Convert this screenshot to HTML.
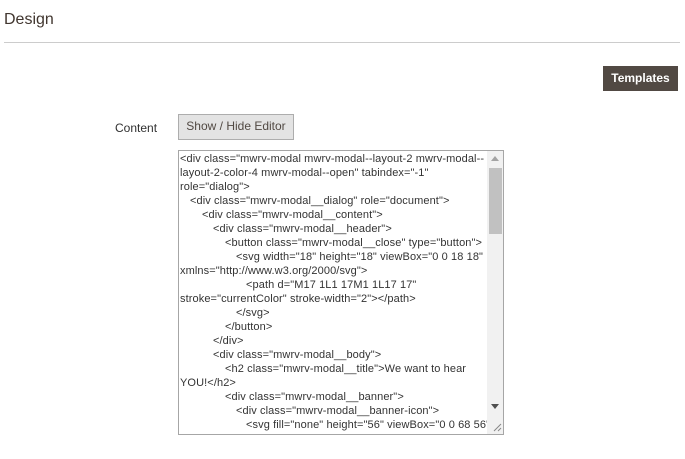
<!DOCTYPE html>
<html><head><meta charset="utf-8"><style>
*{margin:0;padding:0;box-sizing:border-box}
body{width:685px;height:459px;background:#fff;font-family:"Liberation Sans",sans-serif;position:relative;overflow:hidden;color:#333}
.abs{position:absolute}
#title{left:4px;top:11px;font-size:16px;color:#41362f}
#hr{left:4px;top:42px;width:676px;height:1px;background:#ccc}
#tpl{left:603px;top:66px;width:75px;height:25px;background:#514943;color:#fff;font-size:12px;font-weight:bold;text-align:center;line-height:25px}
#lbl{left:115px;top:121px;font-size:12px;color:#303030}
#btn{left:178px;top:114px;width:116px;height:26px;background:#e3e3e3;border:1px solid #adadad;font-size:12px;text-align:center;line-height:23px;color:#514943}
#ta{left:178px;top:150px;width:326px;height:285px;border:1px solid #a6a6a6;overflow:hidden}
.l{position:absolute;white-space:pre;font-size:11px;color:#333;letter-spacing:0.1px}
#sb{position:absolute;left:308px;top:0;width:16px;height:283px;background:#f1f1f1}
#th{position:absolute;left:2px;top:17px;width:13px;height:66px;background:#c1c1c1}
.up{position:absolute;left:4px;top:5px;width:0;height:0;border-left:4px solid transparent;border-right:4px solid transparent;border-bottom:5px solid #a3a3a3}
.dn{position:absolute;left:4px;top:253px;width:0;height:0;border-left:4px solid transparent;border-right:4px solid transparent;border-top:5px solid #505050}
</style></head><body>
<div class="abs" id="title">Design</div>
<div class="abs" id="hr"></div>
<div class="abs" id="tpl">Templates</div>
<div class="abs" id="lbl">Content</div>
<div class="abs" id="btn">Show / Hide Editor</div>
<div class="abs" id="ta">
<div class="l" style="left:1px;top:2px">&lt;div class="mwrv-modal mwrv-modal--layout-2 mwrv-modal--</div>
<div class="l" style="left:1px;top:16px">layout-2-color-4 mwrv-modal--open" tabindex="-1"</div>
<div class="l" style="left:1px;top:30px">role="dialog"&gt;</div>
<div class="l" style="left:11px;top:44px">&lt;div class="mwrv-modal__dialog" role="document"&gt;</div>
<div class="l" style="left:23px;top:58px">&lt;div class="mwrv-modal__content"&gt;</div>
<div class="l" style="left:34px;top:72px">&lt;div class="mwrv-modal__header"&gt;</div>
<div class="l" style="left:46px;top:86px">&lt;button class="mwrv-modal__close" type="button"&gt;</div>
<div class="l" style="left:57px;top:100px">&lt;svg width="18" height="18" viewBox="0 0 18 18"</div>
<div class="l" style="left:1px;top:114px">xmlns="http://www.w3.org/2000/svg"&gt;</div>
<div class="l" style="left:67px;top:128px">&lt;path d="M17 1L1 17M1 1L17 17"</div>
<div class="l" style="left:1px;top:142px">stroke="currentColor" stroke-width="2"&gt;&lt;/path&gt;</div>
<div class="l" style="left:57px;top:156px">&lt;/svg&gt;</div>
<div class="l" style="left:46px;top:170px">&lt;/button&gt;</div>
<div class="l" style="left:34px;top:184px">&lt;/div&gt;</div>
<div class="l" style="left:34px;top:198px">&lt;div class="mwrv-modal__body"&gt;</div>
<div class="l" style="left:46px;top:212px">&lt;h2 class="mwrv-modal__title"&gt;We want to hear</div>
<div class="l" style="left:1px;top:226px">YOU!&lt;/h2&gt;</div>
<div class="l" style="left:46px;top:240px">&lt;div class="mwrv-modal__banner"&gt;</div>
<div class="l" style="left:57px;top:254px">&lt;div class="mwrv-modal__banner-icon"&gt;</div>
<div class="l" style="left:67px;top:268px">&lt;svg fill="none" height="56" viewBox="0 0 68 56"</div>
<div id="sb"><div class="up"></div><div id="th"></div><div class="dn"></div>
<svg style="position:absolute;left:4px;top:270px" width="11" height="11"><path d="M10 3L3 10M10 7L7 10" stroke="#888" stroke-width="1"/></svg></div>
</div>
</body></html>
